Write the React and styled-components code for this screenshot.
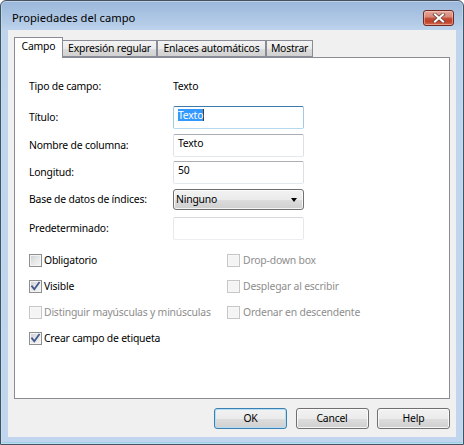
import React from 'react';
import styled, { createGlobalStyle, css } from 'styled-components';

const GlobalStyle = createGlobalStyle`
  html, body { margin: 0; padding: 0; background: #ffffff; }
  body {
    font-family: "Noto Sans", "Open Sans", "DejaVu Sans", sans-serif;
    font-size: 10.4px;
    letter-spacing: -0.2px;
    color: #000;
  }
  * { box-sizing: border-box; }
`;

const Window = styled.div`
  width: 464px;
  height: 445px;
  display: flex;
  flex-direction: column;
  border: 1px solid #46525f;
  border-radius: 6px 6px 0 0;
  background: linear-gradient(to bottom, #9ab7da 0px, #b3cbe7 22px, #bfd4ed 30px, #c1d6ee 100%);
  box-shadow: inset 0 0 0 1px rgba(255, 255, 255, 0.35), inset 0 -1px 0 1px rgba(120, 200, 230, 0.5);
  padding: 0 7px 7px;
  overflow: hidden;
`;

const TitleBar = styled.div`
  height: 29px;
  flex: none;
  display: flex;
  align-items: flex-start;
  justify-content: space-between;
  padding-top: 9px;
`;

const TitleText = styled.div`
  font-size: 11.2px;
  letter-spacing: 0;
  line-height: 15px;
  padding-left: 4px;
  color: #000;
`;

const CloseButton = styled.div`
  width: 31px;
  height: 16px;
  margin-right: 2px;
  border: 1px solid #6d2a20;
  border-radius: 3px;
  background: linear-gradient(to bottom, #e6a79b 0%, #d98a7b 40%, #c34a34 55%, #c0412b 75%, #d4694f 100%);
  box-shadow: inset 0 0 0 1px rgba(255, 220, 210, 0.45);
  display: flex;
  align-items: center;
  justify-content: center;
`;

const Body = styled.div`
  flex: 1;
  display: flex;
  flex-direction: column;
  background: #f0f0f0;
  padding: 7px 6px 8px 6px;
`;

const TabStrip = styled.div`
  display: flex;
  align-items: flex-end;
  height: 21px;
  margin-bottom: -1px;
  position: relative;
  z-index: 1;
`;

const Tab = styled.div`
  width: ${p => p.$w}px;
  text-align: center;
  border: 1px solid #898c95;
  line-height: 15px;
  white-space: nowrap;
  ${p => p.$active ? css`
    height: 21px;
    padding-top: 1px;
    border-bottom: none;
    background: #ffffff;
    position: relative;
    z-index: 2;
  ` : css`
    height: 17px;
    margin-bottom: 1px;
    margin-left: ${p.$overlap ? '-1px' : '0'};
    background: linear-gradient(to bottom, #f3f3f3 0%, #ebebeb 50%, #dddddd 51%, #d1d1d1 100%);
  `}
`;

const Panel = styled.div`
  flex: 1;
  border: 1px solid #898c95;
  background: #ffffff;
  padding: 17px 0 0 14px;
`;

const FormGrid = styled.div`
  display: grid;
  grid-template-columns: 144px 131px;
  grid-template-rows: 31px 28px 27px 28px 28px 23px;
  align-items: start;
`;

const Label = styled.div`
  line-height: ${p => p.$lh || 23}px;
  white-space: nowrap;
`;

const Value = styled.div`
  line-height: 23px;
`;

const TextBox = styled.div`
  width: 131px;
  height: 23px;
  border: 1px solid;
  border-color: ${p => p.$focused
    ? '#3d7bad #a4c9e3 #b7d9ed #a4c9e3'
    : p.$light
      ? '#d5d7dc #e6e8ec #eceef1 #e6e8ec'
      : '#abadb3 #dbdfe6 #e3e9ef #e2e3ea'};
  border-radius: 2px;
  background: #ffffff;
  padding: 1px 4px 0;
  line-height: 15px;
  white-space: nowrap;
`;

const Selected = styled.span`
  display: inline-block;
  height: 12px;
  line-height: 12px;
  background: #3399ff;
  color: #ffffff;
  border-right: 1px solid #4a3a2a;
`;

const Select = styled.div`
  width: 131px;
  height: 21px;
  border: 1px solid #707070;
  border-radius: 3px;
  background: linear-gradient(to bottom, #f2f2f2 0%, #ebebeb 50%, #dddddd 51%, #cfcfcf 100%);
  box-shadow: inset 0 0 0 1px rgba(252, 252, 252, 0.8);
  display: flex;
  align-items: center;
  justify-content: space-between;
  padding: 0 6px 0 2px;
  line-height: 19px;
`;

const Arrow = styled.span`
  width: 0;
  height: 0;
  border-left: 3.5px solid transparent;
  border-right: 3.5px solid transparent;
  border-top: 4px solid #000;
`;

const CheckGrid = styled.div`
  display: grid;
  grid-template-columns: 198px auto;
  grid-auto-rows: 26px;
  margin-top: 7px;
`;

const CheckItem = styled.label`
  display: flex;
  align-items: center;
  gap: ${p => p.$gap || 2}px;
  color: ${p => p.$disabled ? '#8d8d8d' : '#000'};
  white-space: nowrap;
  grid-column: ${p => p.$col};
`;

const Box = styled.span`
  width: 13px;
  height: 13px;
  flex: none;
  border: 1px solid ${p => p.$disabled ? '#c6c6c6' : '#8e8f8f'};
  background: ${p => p.$disabled
    ? '#f4f4f4'
    : 'linear-gradient(135deg, #c9ccd1 0%, #e4e5e7 45%, #f6f6f6 100%)'};
  box-shadow: inset 0 0 0 1px ${p => p.$disabled ? '#f7f7f7' : '#f4f4f4'};
  display: flex;
  align-items: center;
  justify-content: center;
`;

const ButtonRow = styled.div`
  display: flex;
  justify-content: flex-end;
  gap: 8.5px;
  margin-top: 9px;
`;

const Button = styled.div`
  width: 73px;
  height: 21px;
  border: 1px solid ${p => p.$default ? '#3c7fb1' : '#707070'};
  border-radius: 3px;
  background: linear-gradient(to bottom, #f2f2f2 0%, #ebebeb 50%, #dddddd 51%, #cfcfcf 100%);
  box-shadow: inset 0 0 0 1px ${p => p.$default ? '#b4def6' : 'rgba(252,252,252,0.85)'};
  text-align: center;
  line-height: 19px;
`;

const CheckMark = () => (
  <svg width="11" height="11" viewBox="0 0 11 11">
    <path d="M2 5.3 L4.3 8.2 L9 1.8" fill="none" stroke="#44598e" strokeWidth="1.8" strokeLinecap="square" strokeLinejoin="miter" />
  </svg>
);

const CloseX = () => (
  <svg width="14" height="10" viewBox="0 0 14 10">
    <path d="M3 1.5 L11 8.5 M11 1.5 L3 8.5" stroke="#6a4640" strokeWidth="3.6" strokeLinecap="square" />
    <path d="M3 1.5 L11 8.5 M11 1.5 L3 8.5" stroke="#ffffff" strokeWidth="2" strokeLinecap="square" />
  </svg>
);

const Check = ({ label, checked, disabled, col, gap }) => (
  <CheckItem $disabled={disabled} $col={col} $gap={gap}>
    <Box $disabled={disabled}>{checked && <CheckMark />}</Box>
    {label}
  </CheckItem>
);

const tabs = [
  { label: 'Campo', w: 49, active: true },
  { label: 'Expresión regular', w: 95, overlap: true },
  { label: 'Enlaces automáticos', w: 109 },
  { label: 'Mostrar', w: 47 },
];

export default function App() {
  return (
    <>
      <GlobalStyle />
      <Window>
        <TitleBar>
          <TitleText>Propiedades del campo</TitleText>
          <CloseButton><CloseX /></CloseButton>
        </TitleBar>
        <Body>
          <TabStrip>
            {tabs.map(t => (
              <Tab key={t.label} $w={t.w} $active={t.active} $overlap={t.overlap}>{t.label}</Tab>
            ))}
          </TabStrip>
          <Panel>
            <FormGrid>
              <Label>Tipo de campo:</Label>
              <Value>Texto</Value>
              <Label>Título:</Label>
              <TextBox $focused><Selected>Texto</Selected></TextBox>
              <Label>Nombre de columna:</Label>
              <TextBox>Texto</TextBox>
              <Label>Longitud:</Label>
              <TextBox>50</TextBox>
              <Label $lh={21}>Base de datos de índices:</Label>
              <Select>Ninguno<Arrow /></Select>
              <Label>Predeterminado:</Label>
              <TextBox $light />
            </FormGrid>
            <CheckGrid>
              <Check label="Obligatorio" col={1} />
              <Check label="Drop-down box" disabled col={2} gap={3} />
              <Check label="Visible" checked col={1} />
              <Check label="Desplegar al escribir" disabled col={2} gap={3} />
              <Check label="Distinguir mayúsculas y minúsculas" disabled col={1} />
              <Check label="Ordenar en descendente" disabled col={2} gap={3} />
              <Check label="Crear campo de etiqueta" checked col={1} />
            </CheckGrid>
          </Panel>
          <ButtonRow>
            <Button $default>OK</Button>
            <Button>Cancel</Button>
            <Button>Help</Button>
          </ButtonRow>
        </Body>
      </Window>
    </>
  );
}
